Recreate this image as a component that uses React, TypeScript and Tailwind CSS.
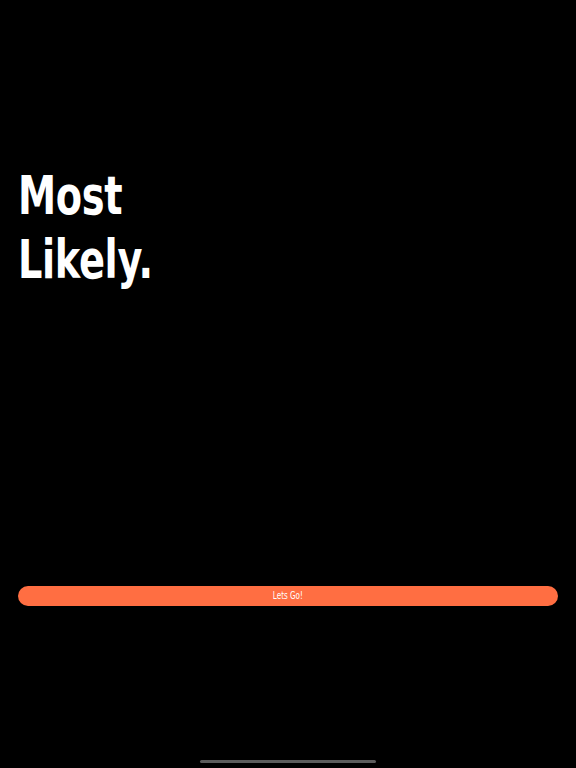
export default function App() {
  return (
    <div className="relative flex h-[768px] w-full flex-col bg-black px-[18px] text-white">
      <h1
        className="mt-[164px] origin-left scale-x-[0.71] text-[54px] font-bold leading-[64px] tracking-[-0.5px]"
        style={{ fontFamily: '"DejaVu Sans", sans-serif' }}
      >
        Most
        <br />
        Likely.
      </h1>
      <button
        type="button"
        className="mt-[294px] h-5 w-full rounded-full bg-[#ff6e42] text-[10px] font-medium leading-5 text-white"
        style={{ fontFamily: '"DejaVu Sans", sans-serif' }}
      >
        <span className="inline-block scale-x-[0.72]">Lets Go!</span>
      </button>
      <div className="absolute bottom-[5px] left-1/2 h-[3px] w-[176px] -translate-x-1/2 rounded-full bg-[#5c5c5c]" />
    </div>
  )
}
